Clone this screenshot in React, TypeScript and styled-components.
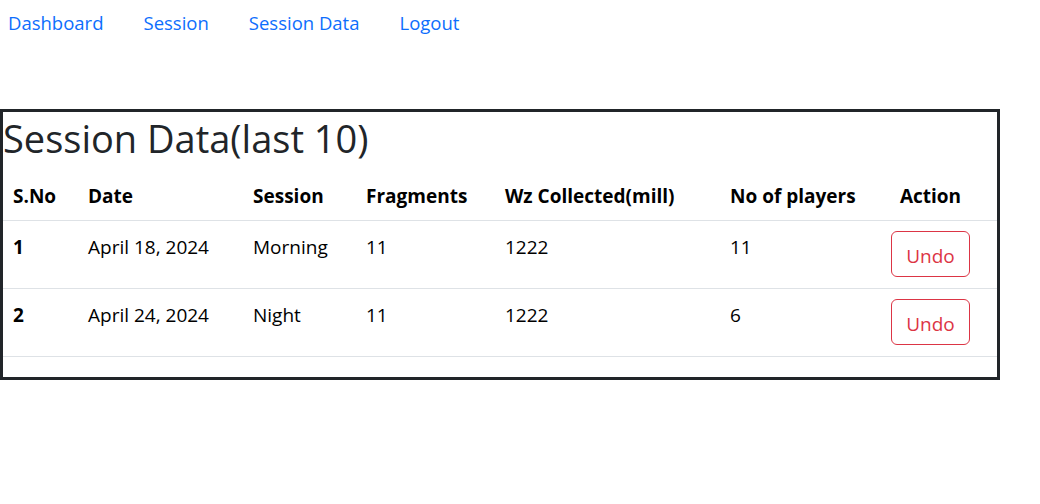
import React from 'react';
import styled, { createGlobalStyle } from 'styled-components';

const GlobalStyle = createGlobalStyle`
  body {
    margin: 0;
    background: #fff;
    font-family: "Open Sans", "Noto Sans", sans-serif;
    color: #212529;
  }
`;

const rows = [
  { no: 1, date: 'April 18, 2024', session: 'Morning', fragments: 11, wz: 1222, players: 11 },
  { no: 2, date: 'April 24, 2024', session: 'Night', fragments: 11, wz: 1222, players: 6 },
];

const App: React.FC = () => {
  return (
    <React.Fragment>
      <GlobalStyle />
      <Nav>
        <NavLink href="#">Dashboard</NavLink>
        <NavLink href="#">Session</NavLink>
        <NavLink href="#">Session Data</NavLink>
        <NavLink href="#">Logout</NavLink>
      </Nav>
      <Panel>
        <Title>Session Data(last 10)</Title>
        <Table>
          <colgroup>
            <col style={{ width: 75 }} />
            <col style={{ width: 165 }} />
            <col style={{ width: 113 }} />
            <col style={{ width: 139 }} />
            <col style={{ width: 225 }} />
            <col style={{ width: 161 }} />
            <col />
          </colgroup>
          <thead>
            <tr>
              <Th>S.No</Th>
              <Th>Date</Th>
              <Th>Session</Th>
              <Th>Fragments</Th>
              <Th>Wz Collected(mill)</Th>
              <Th>No of players</Th>
              <Th $center>Action</Th>
            </tr>
          </thead>
          <tbody>
            {rows.map((row) => (
              <tr key={row.no}>
                <Td $bold>{row.no}</Td>
                <Td>{row.date}</Td>
                <Td>{row.session}</Td>
                <Td>{row.fragments}</Td>
                <Td>{row.wz}</Td>
                <Td>{row.players}</Td>
                <Td>
                  <UndoButton>Undo</UndoButton>
                </Td>
              </tr>
            ))}
          </tbody>
        </Table>
      </Panel>
    </React.Fragment>
  );
};

const Nav = styled.nav`
  display: flex;
  gap: 40px;
  padding: 8px 8px 0;
  height: 109px;
  box-sizing: border-box;
`;

const NavLink = styled.a`
  color: #0d6efd;
  text-decoration: none;
  font-size: 18.5px;
  line-height: 30px;
`;

const Panel = styled.div`
  width: 1000px;
  box-sizing: border-box;
  border: 3px solid #212529;
`;

const Title = styled.h1`
  margin: 0 0 7px;
  font-size: 38px;
  font-weight: 400;
  line-height: 52px;
  color: #212529;
`;

const Table = styled.table`
  width: 100%;
  table-layout: fixed;
  border-collapse: collapse;
  margin-bottom: 20px;
  color: #000;
  font-size: 19px;
  line-height: 30px;
`;

const Th = styled.th<{ $center?: boolean }>`
  padding: 10px 10px 9px;
  text-align: ${(p) => (p.$center ? 'center' : 'left')};
  padding-right: ${(p) => (p.$center ? '27px' : '10px')};
  font-weight: 700;
  border-bottom: 1px solid #dee2e6;
  vertical-align: top;
`;

const Td = styled.td<{ $bold?: boolean }>`
  padding: 11px 10px 10px;
  font-weight: ${(p) => (p.$bold ? 700 : 400)};
  border-bottom: 1px solid #dee2e6;
  vertical-align: top;
`;

const UndoButton = styled.button`
  display: block;
  width: 79px;
  height: 46px;
  margin: -1px 0 1px;
  padding: 3px 0 0;
  border: 1px solid #dc3545;
  border-radius: 6px;
  background: transparent;
  color: #dc3545;
  font-family: inherit;
  font-size: 19px;
  cursor: pointer;
`;

export default App;
